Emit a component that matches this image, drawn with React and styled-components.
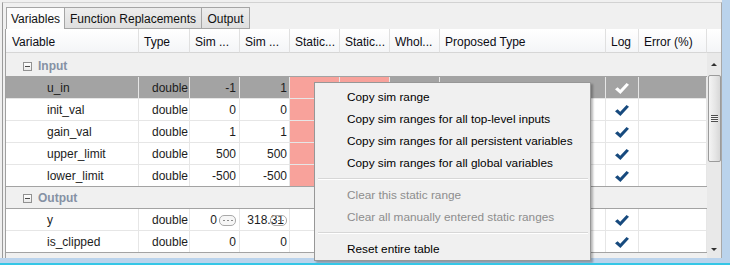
import React from 'react';
import styled, { createGlobalStyle } from 'styled-components';

const GlobalStyle = createGlobalStyle`
  html, body { margin: 0; padding: 0; background: #f0f0f0; }
  body {
    font-family: "Liberation Sans", Arial, sans-serif;
    font-size: 12px;
    color: #1a1a1a;
  }
`;

const COLS = '133px 51px 50px 50px 50px 50px 50px 166px 33px 68px';

const Screen = styled.div`
  position: relative;
  width: 730px;
  height: 265px;
  box-sizing: border-box;
  border-bottom: 2px solid #35c6e6;
  overflow: hidden;
  display: flex;
`;

const Frame = styled.div`
  flex: 1;
  display: flex;
  min-width: 0;
  border-right: 8px solid #bad3ec;
  border-bottom: 5px solid #bad3ec;
  background: #f0f0f0;
`;

const Panel = styled.div`
  flex: 1;
  min-width: 0;
  margin: 2px 0 0 2px;
  border-left: 1px solid #9a9a9a;
  border-top: 1px solid #d2d2d2;
  border-right: 1px solid #a8a8a8;
  padding-left: 2px;
  display: flex;
  flex-direction: column;
`;

const TabStrip = styled.div`
  display: flex;
  padding: 4px 0 0 1px;
  height: 22px;
`;

const Tab = styled.div`
  width: ${p => p.w}px;
  height: 22px;
  box-sizing: border-box;
  display: flex;
  align-items: center;
  justify-content: center;
  padding-top: 1px;
  border-top: 1px solid #a5a5a5;
  border-right: 1px solid #a5a5a5;
  border-left: ${p => (p.first ? '1px solid #a5a5a5' : 'none')};
  border-bottom: ${p => (p.active ? 'none' : '1px solid #a5a5a5')};
  background: ${p => (p.active ? '#fcfcfc' : 'linear-gradient(#ededed, #dfdfdf)')};
  color: #111;
  white-space: nowrap;
`;

const Table = styled.div`
  flex: 1;
  display: flex;
  flex-direction: column;
  border-left: 1px solid #a0a0a0;
  min-height: 0;
`;

const HeaderRow = styled.div`
  display: grid;
  grid-template-columns: ${COLS} 14px;
  height: 24px;
`;

const HeaderCell = styled.div`
  box-sizing: border-box;
  display: flex;
  align-items: center;
  padding: 3px 0 0 ${p => (p.first ? 6 : 5)}px;
  background: linear-gradient(#ffffff, #f4f5f7);
  border-right: ${p => (p.end ? 'none' : '1px solid #e0e0e0')};
  border-bottom: 1px solid #d6d6d6;
  white-space: nowrap;
  overflow: hidden;
  color: #0c0c14;
`;

const Body = styled.div`
  flex: 1;
  display: flex;
  min-height: 0;
`;

const Rows = styled.div`
  width: 701px;
  padding-top: 2px;
  background: #f0f0f0;
  overflow: hidden;
`;

const GroupRow = styled.div`
  height: 22px;
  box-sizing: border-box;
  display: flex;
  align-items: center;
  padding: 1px 0 0 17px;
  border-bottom: 1px solid #a3a3a3;
`;

const ExpandBox = styled.span`
  position: relative;
  width: 9px;
  height: 9px;
  box-sizing: border-box;
  border: 1px solid #919191;
  background: linear-gradient(#ffffff, #e9e9e9);
  &::after {
    content: '';
    position: absolute;
    left: 1px;
    right: 1px;
    top: 3px;
    height: 1px;
    background: #4a4a4a;
  }
`;

const GroupLabel = styled.span`
  margin-left: 6px;
  font-weight: bold;
  color: #8591a4;
`;

const DataRow = styled.div`
  display: grid;
  grid-template-columns: ${COLS};
  height: 22px;
  box-sizing: border-box;
  border-bottom: 1px solid ${p => (p.last ? '#a3a3a3' : '#e6e6e6')};
  background: ${p => (p.selected ? '#a3a3a3' : '#ffffff')};
`;

const Cell = styled.div`
  box-sizing: border-box;
  display: flex;
  align-items: center;
  justify-content: ${p => p.align || 'flex-start'};
  padding: 1px ${p => p.pr ?? 3}px 0 ${p => p.pl ?? 3}px;
  border-right: 1px solid #e6e6e6;
  background: ${p => (p.pink ? '#f8a29b' : 'transparent')};
  white-space: nowrap;
  overflow: hidden;
  color: #1c1c1c;
`;

const Pill = styled.span`
  flex: none;
  display: inline-flex;
  align-items: center;
  justify-content: center;
  gap: 2px;
  width: 17px;
  height: 11px;
  box-sizing: border-box;
  margin-left: ${p => (p.overlap ? -14 : 2)}px;
  border: 1px solid #a9a9a9;
  border-radius: 5px;
  background: ${p => (p.overlap ? 'transparent' : '#f6f6f6')};
`;

const Dot = styled.i`
  width: 2px;
  height: 1px;
  background: #8a8a8a;
`;

const ScrollBar = styled.div`
  width: 14px;
  display: flex;
  flex-direction: column;
  align-items: center;
  background: #e9e9e9;
`;

const ScrollButton = styled.div`
  height: ${p => p.h}px;
  width: 100%;
  display: flex;
  align-items: center;
  justify-content: center;
  margin-top: ${p => (p.down ? 'auto' : 0)};
`;

const Arrow = styled.span`
  width: 0;
  height: 0;
  border-left: 3px solid transparent;
  border-right: 3px solid transparent;
  ${p => (p.down ? 'border-top: 3px solid #303030;' : 'border-bottom: 3px solid #303030;')}
`;

const Thumb = styled.div`
  width: 13px;
  height: 87px;
  box-sizing: border-box;
  border: 1px solid #9b9b9b;
  border-radius: 2px;
  background: linear-gradient(to right, #f4f4f4, #e6e6e6 55%, #d8d8d8);
  display: flex;
  align-items: center;
  justify-content: center;
`;

const Grip = styled.span`
  width: 7px;
  height: 7px;
  background: repeating-linear-gradient(#4e4e4e 0 1px, #f2f2f2 1px 2px);
`;

const Menu = styled.div`
  position: absolute;
  left: 314px;
  top: 82px;
  width: 277px;
  box-sizing: border-box;
  padding-top: 3px;
  background: #f0f0f0;
  border: 1px solid #979797;
  box-shadow: 2px 2px 2px rgba(0, 0, 0, 0.28);
  font-size: 11.8px;
  z-index: 5;
`;

const MenuItem = styled.div`
  height: 22px;
  line-height: 23px;
  padding-left: 32px;
  color: ${p => (p.disabled ? '#8d8d8d' : '#000000')};
  white-space: nowrap;
`;

const MenuSeparator = styled.div`
  height: 10px;
  box-sizing: border-box;
  padding: 4px 2px 0 3px;
  &::after {
    content: '';
    display: block;
    border-top: 1px solid #d7d7d7;
    border-bottom: 1px solid #ffffff;
  }
`;

function Check({ light }) {
  return (
    <svg width="14" height="11" viewBox="0 0 14 11">
      <polygon
        points="0,6.3 2.6,4.3 5.2,6.8 11.6,0 14,1.7 5.4,11"
        fill={light ? '#ffffff' : '#174a7e'}
      />
    </svg>
  );
}

function Dots({ overlap }) {
  return (
    <Pill overlap={overlap}>
      <Dot />
      <Dot />
      <Dot />
    </Pill>
  );
}

const headers = ['Variable', 'Type', 'Sim ...', 'Sim ...', 'Static...', 'Static...', 'Whol...', 'Proposed Type', 'Log', 'Error (%)'];

const inputs = [
  { name: 'u_in', min: '-1', max: '1', selected: true },
  { name: 'init_val', min: '0', max: '0' },
  { name: 'gain_val', min: '1', max: '1' },
  { name: 'upper_limit', min: '500', max: '500' },
  { name: 'lower_limit', min: '-500', max: '-500' },
];

const outputs = [
  { name: 'y', min: '0', max: '318.31', buttons: true },
  { name: 'is_clipped', min: '0', max: '0' },
];

function VarRow({ row, last, pink }) {
  return (
    <DataRow selected={row.selected} last={last}>
      <Cell pl={41}>{row.name}</Cell>
      <Cell align="flex-end" pr={1}>double</Cell>
      <Cell align="flex-end">
        {row.min}
        {row.buttons && <Dots />}
      </Cell>
      <Cell align="flex-end" pr={2}>
        {row.max}
        {row.buttons && <Dots overlap />}
      </Cell>
      <Cell pink={pink} />
      <Cell pink={pink} />
      <Cell />
      <Cell />
      <Cell align="center" pl={0} pr={0}>
        <Check light={row.selected} />
      </Cell>
      <Cell />
    </DataRow>
  );
}

function Group({ label, rows, pink }) {
  return (
    <>
      <GroupRow>
        <ExpandBox />
        <GroupLabel>{label}</GroupLabel>
      </GroupRow>
      {rows.map((r, i) => (
        <VarRow key={r.name} row={r} pink={pink} last={i === rows.length - 1} />
      ))}
    </>
  );
}

export default function App() {
  return (
    <Screen>
      <GlobalStyle />
      <Frame>
        <Panel>
          <TabStrip>
            <Tab first active w={59}>Variables</Tab>
            <Tab w={137}>Function Replacements</Tab>
            <Tab w={48}>Output</Tab>
          </TabStrip>
          <Table>
            <HeaderRow>
              {headers.map((h, i) => (
                <HeaderCell key={i} first={i === 0}>{h}</HeaderCell>
              ))}
              <HeaderCell end />
            </HeaderRow>
            <Body>
              <Rows>
                <Group label="Input" rows={inputs} pink />
                <Group label="Output" rows={outputs} />
              </Rows>
              <ScrollBar>
                <ScrollButton h={22}><Arrow /></ScrollButton>
                <Thumb><Grip /></Thumb>
                <ScrollButton h={17} down><Arrow down /></ScrollButton>
              </ScrollBar>
            </Body>
          </Table>
        </Panel>
      </Frame>
      <Menu>
        <MenuItem>Copy sim range</MenuItem>
        <MenuItem>Copy sim ranges for all top-level inputs</MenuItem>
        <MenuItem>Copy sim ranges for all persistent variables</MenuItem>
        <MenuItem>Copy sim ranges for all global variables</MenuItem>
        <MenuSeparator />
        <MenuItem disabled>Clear this static range</MenuItem>
        <MenuItem disabled>Clear all manually entered static ranges</MenuItem>
        <MenuSeparator />
        <MenuItem>Reset entire table</MenuItem>
      </Menu>
    </Screen>
  );
}
